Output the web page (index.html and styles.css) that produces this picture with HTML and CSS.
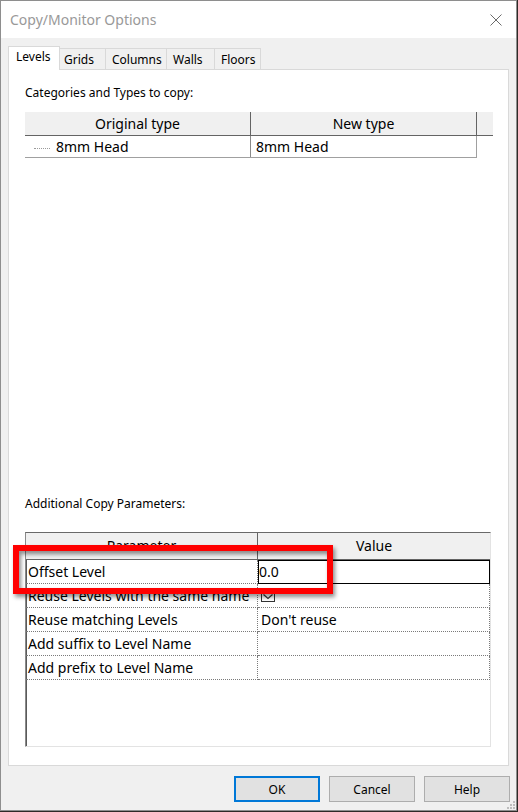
FILE: index.html
```html
<!DOCTYPE html>
<html lang="en">
<head>
    <meta charset="UTF-8">
    <title>Copy/Monitor Options</title>
    <link rel="stylesheet" href="styles.css">
</head>
<body>

<div class="window">
    <div class="titlebar">
        <span class="title">Copy/Monitor Options</span>
        <svg class="close" width="12" height="12" viewBox="0 0 12 12">
            <path d="M0.5 0.5 L11.5 11.5 M11.5 0.5 L0.5 11.5" stroke="#6b6b6b" stroke-width="1" fill="none"/>
        </svg>
    </div>

    <div class="client">
        <div class="tabs">
            <div class="tab tab-levels active">Levels</div>
            <div class="tab tab-grids">Grids</div>
            <div class="tab tab-columns">Columns</div>
            <div class="tab tab-walls">Walls</div>
            <div class="tab tab-floors">Floors</div>
        </div>

        <div class="panel">
            <div class="label">Categories and Types to copy:</div>

            <div class="types">
                <div class="types-head">
                    <div class="th col-orig">Original type</div>
                    <div class="th col-new">New type</div>
                    <div class="th col-pad"></div>
                </div>
                <div class="types-row">
                    <div class="td col-orig"><span class="tree-dots"></span>8mm Head</div>
                    <div class="td col-new">8mm Head</div>
                </div>
            </div>

            <div class="label label-params">Additional Copy Parameters:</div>

            <div class="params">
                <div class="params-head">
                    <div class="ph">Parameter</div>
                    <div class="ph">Value</div>
                </div>
                <div class="prow">
                    <div class="pcell">Offset Level</div>
                    <div class="pcell value selected">0.0</div>
                </div>
                <div class="prow">
                    <div class="pcell">Reuse Levels with the same name</div>
                    <div class="pcell value">
                        <svg class="check" width="14" height="14" viewBox="0 0 14 14">
                            <rect x="0.5" y="0.5" width="13" height="13" fill="#fff" stroke="#333"/>
                            <path d="M2.5 6.5 L7 10.5 L11.5 6.5" stroke="#333" stroke-width="1.2" fill="none"/>
                        </svg>
                    </div>
                </div>
                <div class="prow">
                    <div class="pcell">Reuse matching Levels</div>
                    <div class="pcell value">Don't reuse</div>
                </div>
                <div class="prow">
                    <div class="pcell">Add suffix to Level Name</div>
                    <div class="pcell value"></div>
                </div>
                <div class="prow">
                    <div class="pcell">Add prefix to Level Name</div>
                    <div class="pcell value"></div>
                </div>

                <div class="callout"></div>
            </div>
        </div>

        <div class="buttons">
            <button class="btn default">OK</button>
            <button class="btn">Cancel</button>
            <button class="btn">Help</button>
        </div>
    </div>

    <svg class="grip" width="9" height="9" viewBox="0 0 9 9">
        <rect x="7" y="1" width="2" height="2" fill="#bdbdbd"/>
        <rect x="4" y="4" width="2" height="2" fill="#bdbdbd"/>
        <rect x="7" y="4" width="2" height="2" fill="#bdbdbd"/>
        <rect x="1" y="7" width="2" height="2" fill="#bdbdbd"/>
        <rect x="4" y="7" width="2" height="2" fill="#bdbdbd"/>
        <rect x="7" y="7" width="2" height="2" fill="#bdbdbd"/>
    </svg>
</div>

</body>
</html>
```

FILE: styles.css
```css
* {
    box-sizing: border-box;
}

body {
    margin: 0;
    padding: 0;
    background: #2f2a27;
    font-family: "Noto Sans", "Liberation Sans", sans-serif;
    color: #000;
}

.window {
    position: relative;
    width: 517px;
    height: 811px;
    border: 1px solid #8e8e8e;
    background: #f0f0f0;
    display: flex;
    flex-direction: column;
}

/* title bar */

.titlebar {
    height: 37px;
    background: #fff;
    display: flex;
    align-items: center;
    justify-content: space-between;
    padding: 0 14px 0 9px;
}

.title {
    font-size: 14px;
    color: #999;
}

.close {
    display: block;
}

.client {
    flex: 1;
    display: flex;
    flex-direction: column;
    padding: 8px 7px 0 7px;
}

/* tabs */

.tabs {
    display: flex;
    align-items: flex-end;
    height: 24px;
}

.tab {
    height: 22px;
    margin-left: -1px;
    padding-left: 6px;
    border: 1px solid #d9d9d9;
    border-bottom: none;
    background: #f0f0f0;
    font-size: 12px;
    line-height: 21px;
    white-space: nowrap;
}

.tab.active {
    position: relative;
    z-index: 1;
    height: 24px;
    margin-left: 0;
    background: #fff;
    line-height: 20px;
}

.tab-levels  { width: 52px; padding-left: 7px; }
.tab-grids   { width: 47px; padding-left: 4px; }
.tab-columns { width: 62px; padding-left: 6px; }
.tab-walls   { width: 49px; padding-left: 6px; }
.tab-floors  { width: 47px; padding-left: 6px; }

.panel {
    height: 697px;
    margin-top: -1px;
    background: #fff;
    border: 1px solid #d9d9d9;
    display: flex;
    flex-direction: column;
    padding: 15px 15px 18px 16px;
}

.label {
    font-size: 12px;
    line-height: 16px;
}

/* types list */

.types {
    margin-top: 11px;
    width: 468px;
    font-size: 14px;
}

.types-head {
    display: flex;
    height: 24px;
    background: #f0f0f0;
    border-bottom: 1px solid #646464;
}

.th {
    line-height: 23px;
    text-align: center;
}

.types-head .col-orig,
.types-head .col-new {
    width: 226px;
    border-right: 1px solid #646464;
}

.col-pad {
    flex: 1;
}

.types-row {
    display: flex;
    width: 452px;
    height: 22px;
    border-bottom: 1px solid #a0a0a0;
    border-right: 1px solid #a0a0a0;
}

.td {
    line-height: 21px;
}

.types-row .col-orig {
    width: 226px;
    padding-left: 9px;
    border-right: 1px solid #8a8a8a;
}

.types-row .col-new {
    flex: 1;
    padding-left: 5px;
}

.tree-dots {
    display: inline-block;
    width: 16px;
    margin-right: 6px;
    vertical-align: middle;
    border-top: 1px dotted #9a9a9a;
}

/* parameter grid */

.label-params {
    margin-top: auto;
    margin-bottom: 20px;
}

.params {
    position: relative;
    width: 466px;
    height: 215px;
    font-size: 14px;
    border: 1px solid #e3e3e3;
    border-top-color: #696969;
    border-left-color: #8a8a8a;
    box-shadow: inset 1px 0 0 #5a5a5a;
}

.params-head {
    display: grid;
    grid-template-columns: 232px 232px;
    height: 27px;
    background: #f0f0f0;
    border-bottom: 1px solid #646464;
}

.ph {
    line-height: 26px;
    text-align: center;
}

.ph:first-child {
    border-right: 1px solid #646464;
}

.prow {
    display: grid;
    grid-template-columns: 232px 232px;
    height: 24px;
}

.pcell {
    height: 24px;
    padding-left: 2px;
    line-height: 23px;
    white-space: nowrap;
    overflow: hidden;
    border-right: 1px dotted #7a7a7a;
    border-bottom: 1px dotted #7a7a7a;
}

.pcell.value {
    padding-left: 3px;
}

.pcell.selected {
    padding-left: 1px;
    outline: 1px solid #000;
    outline-offset: -1px;
}

.check {
    display: block;
    margin-top: 4px;
}

/* red markup frame drawn over the grid */

.callout {
    position: absolute;
    left: -13px;
    top: 12px;
    width: 320px;
    height: 49px;
    border: 6px solid #f00;
    filter: drop-shadow(2px 3px 2px rgba(0, 0, 0, 0.45));
}

/* dialog buttons */

.buttons {
    display: flex;
    justify-content: flex-end;
    gap: 9px;
    margin-top: 10px;
    margin-right: -1px;
}

.btn {
    width: 86px;
    height: 26px;
    padding: 0;
    border: 1px solid #adadad;
    background: #e1e1e1;
    font-family: "Noto Sans", "Liberation Sans", sans-serif;
    font-size: 12px;
    color: #000;
}

.btn.default {
    border: 2px solid #0078d7;
}

.grip {
    position: absolute;
    right: 1px;
    bottom: 1px;
}
```
